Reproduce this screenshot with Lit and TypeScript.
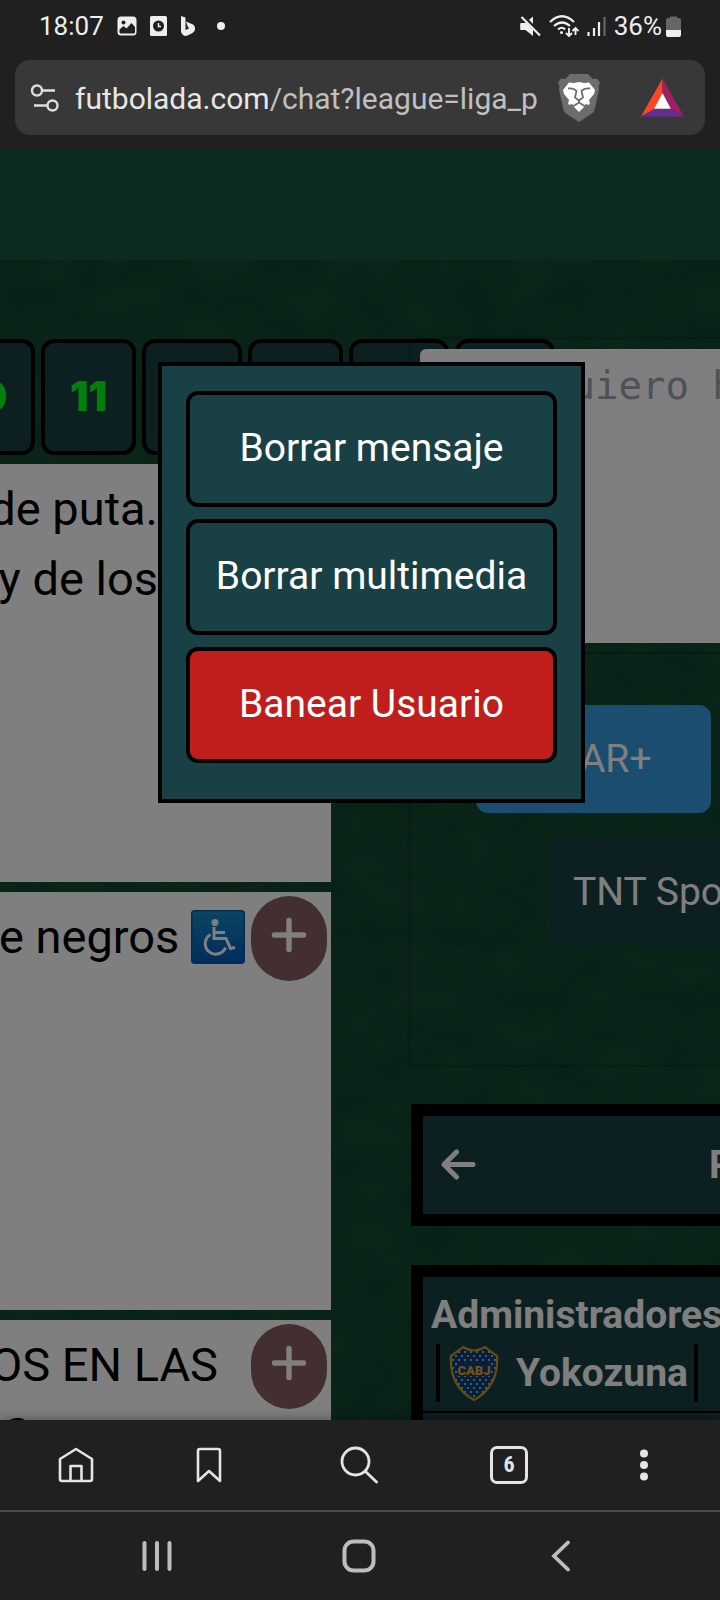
import { LitElement, html, css, svg } from "lit";
import { customElement } from "lit/decorators.js";

const plus = html`<svg width="36" height="36" viewBox="0 0 36 36" fill="none" stroke="currentColor" stroke-width="5.5" stroke-linecap="round"><path d="M18 3.500v29M3.500 18h29" /></svg>`;

@customElement("status-bar")
class StatusBar extends LitElement {
  static styles = css`
    :host {
      display: flex;
      align-items: center;
      height: 52px;
      padding: 0 39px;
      box-sizing: border-box;
      color: #eee;
      font-size: 26px;
      line-height: 30px;
    }
    .side { display: flex; align-items: center; gap: 13px; }
    .side.right { margin-left: auto; gap: 8px; }
    .dot { width: 8px; height: 8px; border-radius: 50%; background: #eee; margin-left: 8px; }
    .power { display: flex; align-items: center; gap: 4px; }
    svg { display: block; }
  `;
  render() {
    return html`
      <div class="side">
        <span>18:07</span>
        <svg width="20" height="20" viewBox="0 0 20 20">
          <rect x=".5" y=".5" width="19" height="19" rx="3.500" fill="#eee" />
          <circle cx="6.500" cy="6.500" r="2" fill="#202020" />
          <path d="M2.500 16v-2.500l4-3.500 3 2.500 5-5.500 3.500 4V16q0 1.500-1.500 1.500H4Q2.500 17.500 2.500 16z" fill="#202020" />
        </svg>
        <svg width="17" height="20" viewBox="0 0 17 20">
          <rect width="17" height="20" rx="1.500" fill="#eee" />
          <circle cx="8.500" cy="10" r="5.500" fill="#202020" />
          <path d="M8.500 7v3.500H11" fill="none" stroke="#eee" stroke-width="1.500" />
        </svg>
        <svg width="16" height="20" viewBox="0 0 16 20" fill="#eee">
          <path d="M1 0l4.500 1.500V14L9 12.500 7.500 10 6 5.500l7 3q2.500 1.500 2 5-.5 2-2.500 3.500l-5 2.500q-2.500 1-4.500-.5Q1 17.500 1 15z" />
        </svg>
        <span class="dot"></span>
      </div>
      <div class="side right">
        <svg width="21" height="21" viewBox="0 0 21 21">
          <path d="M1 7h4l8-6.500V20L5.500 14H1q-.8 0-.8-.8V8Q.2 7 1 7z" fill="#eee" />
          <path d="M3 .5L20 18" stroke="#202020" stroke-width="4" />
          <path d="M1.500 1L20 19.500" stroke="#eee" stroke-width="2.200" />
        </svg>
        <svg width="30" height="24" viewBox="0 0 30 24" fill="none" stroke="#eee" stroke-width="2.200">
          <path d="M1 8Q13-3.500 25 8M5 12q8-7 16 0M9 15.500q4-3.500 7 0" />
          <circle cx="12.500" cy="18.500" r="1.500" fill="#eee" stroke="none" />
          <path d="M20 14v8m-3-3l3 3 3-3M26.500 21v-7m-3 3l3-3 3 3" stroke-width="1.900" />
        </svg>
        <svg width="19" height="20" viewBox="0 0 19 20" stroke-width="2.200">
          <path d="M1.500 16v4M7 12v8M12 6v14" stroke="#eee" />
          <path d="M17.500 1v19" stroke="#666" />
        </svg>
        <span class="power">
          <span>36%</span>
          <svg width="15" height="21" viewBox="0 0 15 21">
            <path d="M4 2V.5h7V2h2q2 0 2 2v11H0V4q0-2 2-2z" fill="#666" />
            <path d="M0 14h15v5q0 2-2 2H2q-2 0-2-2z" fill="#eee" />
          </svg>
        </span>
      </div>
    `;
  }
}

@customElement("address-bar")
class AddressBar extends LitElement {
  static styles = css`
    :host { display: block; padding: 8px 15px 15px; }
    .bar {
      display: flex;
      align-items: center;
      height: 75px;
      padding: 0 21px 0 15px;
      border-radius: 15px;
      background: #383838;
    }
    button { border: 0; padding: 0; background: none; font: inherit; display: block; }
    svg { display: block; }
    .url {
      flex: 1;
      min-width: 0;
      margin-left: 15px;
      padding-top: 2px;
      overflow: hidden;
      white-space: nowrap;
      text-align: left;
      font-size: 30px;
      line-height: 40px;
      color: #c0c0c0;
    }
    .host { color: #e6e6e6; }
    .shield { margin-right: 41px; }
  `;
  render() {
    return html`
      <div class="bar">
        <button aria-label="Información del sitio">
          <svg width="30" height="28" viewBox="0 0 30 28" fill="none" stroke="#ddd" stroke-width="2.400">
            <circle cx="7" cy="6.500" r="5" /><path d="M12 6.500h13M4 21.500h13" />
            <circle cx="22.500" cy="21.500" r="5" />
          </svg>
        </button>
        <button class="url"><span class="host">futbolada.com</span>/chat?league=liga_p</button>
        <button class="shield" aria-label="Escudos">
          <svg width="42" height="48" viewBox="0 0 42 48">
            <path d="M12 0h18l5 5 4-.5 3 4-1.500 4L41 16l-4.500 20Q36 38 34 39.500L21 48 8 39.500Q6 38 5.500 36L1 16l.5-3.500L0 8.500l3-4L7 5z" fill="#6d6d6d" />
            <path d="M11 8.500l5 .5 5-1 5 1 5-.5 6 7.500-1 4-5 6 1 4-6 3-2.500 2.500L21 38l-2.500-2.500L16 33l-6-3 1-4-5-6-1-4z" fill="#fff" />
            <path d="M10 14.500q6-.5 8.500 2.500l-1.500 6.500 4 3 4-3-1.500-6.500q2.500-3 8.500-2.500" fill="none" stroke="#6d6d6d" stroke-width="1.800" />
            <path d="M21 26v3M12.500 30.500l3 1.500L21 28.500l5.500 3.500 3-1.500" fill="none" stroke="#6d6d6d" stroke-width="1.800" />
          </svg>
        </button>
        <button aria-label="Recompensas">
          <svg width="43" height="39" viewBox="0 0 44 39">
            <path d="M22 0v15l-8 16L0 39z" fill="#ff4724" />
            <path d="M22 0l22 39-14-8-8-16z" fill="#9e1f63" />
            <path d="M0 39l14-8h16l14 8z" fill="#662d91" />
            <path d="M22 15l8.500 16h-17z" fill="#fff" />
          </svg>
        </button>
      </div>
    `;
  }
}

@customElement("chat-message")
class ChatMessage extends LitElement {
  static styles = css`
    :host {
      display: flex;
      align-items: flex-start;
      justify-content: flex-end;
      gap: 6px;
      min-height: 418px;
      box-sizing: border-box;
      padding: 4px 4px 0 0;
      background: #fff;
      color: #000;
    }
    .text {
      padding-top: 6px;
      text-align: right;
      white-space: nowrap;
      font-size: 47px;
      line-height: 70px;
    }
    .more {
      flex: none;
      width: 76px;
      height: 85px;
      padding: 0 0 7px;
      border: 0;
      border-radius: 38px;
      background: #865e5e;
      color: #fff;
      display: grid;
      place-items: center;
    }
  `;
  render() {
    return html`
      <div class="text"><slot></slot></div>
      <button class="more" aria-label="Más opciones">${plus}</button>
    `;
  }
}

@customElement("chat-page")
class ChatPage extends LitElement {
  static styles = css`
    :host {
      display: block;
      position: relative;
      overflow: hidden;
      background: #0e442d;
    }
    .grass { position: absolute; inset: 0; width: 100%; height: 100%; }
    .banner { position: relative; height: 110px; background: #18543c; }
    .columns {
      position: relative;
      display: grid;
      grid-template-columns: 331px 620px;
      column-gap: 80px;
      padding-top: 79px;
    }
    .rounds { display: flex; gap: 6px; margin-left: -68px; width: max-content; }
    .rounds button {
      width: 95px;
      height: 116px;
      border: 4px solid #000;
      border-radius: 13px;
      background: #194145;
      color: #00ff18;
      font: 900 41px Inter, sans-serif;
      padding: 0 0 3px;
    }
    .rounds .wide { width: 100px; }
    .rounds .first { width: 103px; }
    .messages { display: flex; flex-direction: column; gap: 10px; margin-top: 9px; }
    .pad-long { padding-right: 87px; }
    .pad-short { padding-right: 27px; }
    .last { display: block; padding-right: 214px; }
    .emoji { display: inline-block; vertical-align: -11px; }
    .side { position: relative; min-width: 0; }
    .composer {
      padding: 10px 9px 0;
      height: 726px;
      box-sizing: border-box;
      box-shadow: 0 0 4px #0008;
      display: flex;
      flex-direction: column;
      align-items: flex-start;
    }
    textarea {
      display: block;
      box-sizing: border-box;
      width: 100%;
      height: 294px;
      padding: 13px 0 0 128px;
      border: 0;
      border-radius: 6px;
      resize: none;
      background: #fff;
      font: 39px/48px "DejaVu Sans Mono", monospace;
    }
    textarea::placeholder { color: #9ca3af; opacity: 1; }
    .links {
      width: 100%;
      box-sizing: border-box;
      margin-top: 9px;
      padding: 51px 56px 0;
      display: flex;
      flex-direction: column;
      align-items: flex-start;
      gap: 25px;
      border-top: 2px solid #0a3824;
    }
    .links a {
      box-sizing: border-box;
      height: 108px;
      border-radius: 12px;
      padding: 0 59px;
      color: #fff;
      text-decoration: none;
      font-size: 39px;
      line-height: 108px;
    }
    .links .star { background: #369adc; }
    .links .tnt { background: #194145; margin-left: 73px; padding: 0 24px; }
    .box {
      margin-top: 39px;
      border: 12px solid #000;
      background: #194145;
      color: #fff;
      font-size: 39px;
      font-weight: 700;
    }
    .heading { display: flex; align-items: center; height: 98px; padding-left: 18px; }
    .heading button { border: 0; padding: 0 0 1px; background: none; color: #fff; display: block; }
    .heading span { margin-left: 233px; }
    svg { display: block; }
    .title { margin: 0; padding: 13px 8px 0; font-size: 39px; line-height: 50px; }
    .admin {
      display: inline-flex;
      align-items: center;
      height: 58px;
      margin: 4px 0 9px 13px;
      padding: 0 6px 0 9px;
      border: solid #000;
      border-width: 0 4px;
      line-height: 58px;
      vertical-align: top;
    }
    .admin span { margin-left: 17px; }
    .next { height: 80px; border-top: 2px solid #000; }
    .shade { position: absolute; inset: 0; background: #00000080; }
    .dialog {
      position: absolute;
      left: 158px;
      top: 212px;
      box-sizing: border-box;
      width: 427px;
      padding: 25px 24px 36px;
      border: 4px solid #000;
      background: #194145;
      display: flex;
      flex-direction: column;
      gap: 12px;
    }
    .dialog button {
      height: 116px;
      padding: 0 0 2px;
      border: 4px solid #000;
      border-radius: 12px;
      background: #194145;
      color: #fff;
      font: 39px Roboto, sans-serif;
    }
    .dialog .danger { background: #c01e1c; }
  `;
  private dots() {
    const out = [];
    for (let r = 0; r < 13; r++)
      for (let c = 0; c < 8; c++)
        out.push(svg`<circle cx=${4 + c * 6 + (r % 2) * 3} cy=${7 + r * 4} r="0.9" fill="#ffe9a0" />`);
    return out;
  }
  render() {
    return html`
      <svg class="grass" aria-hidden="true">
        <filter id="n" x="0" y="0" width="100%" height="100%">
          <feTurbulence type="fractalNoise" baseFrequency="0.02 0.03" numOctaves="4" seed="4" />
          <feColorMatrix values="0 0 0 0 .16  0 0 0 0 .22  0 0 0 0 .12  .9 0 0 0 -.2" />
        </filter>
        <rect width="100%" height="100%" filter="url(#n)" opacity=".22" />
      </svg>
      <div class="banner"></div>
      <div class="columns">
        <div>
          <nav class="rounds" aria-label="Fechas">
            <button class="first">10</button><button>11</button>
            <button class="wide"></button><button></button>
            <button class="wide"></button><button class="wide"></button>
          </nav>
          <div class="messages">
            <chat-message><div class="pad-long">de puta.<br />y de los</div></chat-message>
            <chat-message>e negros <svg class="emoji" role="img" aria-label="♿" width="54" height="54" viewBox="0 0 54 54">
              <defs><linearGradient id="g" x2="0" y2="1"><stop stop-color="#168cc4" /><stop offset="1" stop-color="#0359b8" /></linearGradient></defs>
              <rect x=".75" y=".75" width="52.500" height="52.500" rx="3" fill="url(#g)" stroke="#0a55a8" stroke-width="1.500" />
              <circle cx="24" cy="12.500" r="3.500" fill="#fff" />
              <path d="M23 17v11.500h12l4.500 10 4.500-1M23 22.500h11M19.500 24.500a10.500 10.500 0 1 0 15 13" fill="none" stroke="#fff" stroke-width="3" />
            </svg></chat-message>
            <chat-message><div class="pad-short">OS EN LAS</div><span class="last">S</span></chat-message>
          </div>
        </div>
        <div class="side">
          <div class="composer">
            <textarea aria-label="Mensaje" placeholder="Quiero hablar de"></textarea>
            <div class="links">
              <a class="star" href="#star">STAR+</a>
              <a class="tnt" href="#tnt">TNT Sports</a>
            </div>
          </div>
          <div class="box heading">
            <button aria-label="Anterior">
              <svg width="35" height="31" viewBox="0 0 35 31" fill="none" stroke="currentColor" stroke-width="5" stroke-linecap="round" stroke-linejoin="round"><path d="M15.500 3L3 15.500 15.500 28M3.500 15.500h28.500" /></svg>
            </button>
            <span>Posiciones</span>
          </div>
          <div class="box">
            <h2 class="title">Administradores</h2>
            <div class="admin">
              <svg width="50" height="57" viewBox="0 0 50 57">
                <defs><clipPath id="c"><path d="M14 2q11 7 22 0l12 9q2 30-23 44Q0 41 2 11z" /></clipPath></defs>
                <g clip-path="url(#c)">
                  <rect width="50" height="57" fill="#0a407c" />
                  ${this.dots()}
                  <rect x="8" y="18" width="34" height="13" fill="#0a407c" />
                </g>
                <path d="M14 2q11 7 22 0l12 9q2 30-23 44Q0 41 2 11z" fill="none" stroke="#c8961e" stroke-width="2.200" />
                <text x="25" y="30" text-anchor="middle" font-family="Roboto" font-weight="900" font-size="13" fill="#e0a81e">CABJ</text>
              </svg>
              <span>Yokozuna</span>
            </div>
            <div class="next"></div>
          </div>
        </div>
      </div>
      <div class="shade"></div>
      <div class="dialog" role="dialog" aria-label="Moderación">
        <button>Borrar mensaje</button>
        <button>Borrar multimedia</button>
        <button class="danger">Banear Usuario</button>
      </div>
    `;
  }
}

@customElement("app-root")
class AppRoot extends LitElement {
  static styles = css`
    :host {
      display: flex;
      flex-direction: column;
      height: 100vh;
      overflow: hidden;
      background: #202020;
      font-family: Roboto, sans-serif;
    }
    chat-page { flex: 1; min-height: 0; }
    .tools {
      position: relative;
      display: grid;
      grid-template-columns: 151fr 116fr 184fr 116fr 153fr;
      height: 90px;
      background: #202020;
      box-shadow: 0 0 12px #0006;
    }
    .system {
      position: relative;
      display: grid;
      grid-template-columns: repeat(3, 1fr);
      height: 88px;
      padding: 0 58px 0 56px;
      background: #202020;
      border-top: 2px solid #4a4a4a;
    }
    button {
      display: grid;
      place-items: center;
      border: 0;
      padding: 0;
      background: none;
      color: #e4e4e4;
    }
    .system button { color: #bdbdbd; }
    .count {
      box-sizing: border-box;
      width: 38px;
      height: 38px;
      border: 3px solid;
      border-radius: 7px;
      font: 700 22px/32px "Roboto Condensed", Roboto, sans-serif;
    }
    svg { display: block; }
  `;
  render() {
    return html`
      <status-bar></status-bar>
      <address-bar></address-bar>
      <chat-page></chat-page>
      <div class="tools">
        <button aria-label="Inicio">
          <svg width="36" height="36" viewBox="0 0 36 36" fill="none" stroke="currentColor" stroke-width="2.600" stroke-linejoin="round"><path d="M2 12L18 2l16 10v20q0 2-2 2H4q-2 0-2-2zM12.500 34V19h11v15" /></svg>
        </button>
        <button aria-label="Marcadores">
          <svg width="26" height="36" viewBox="0 0 26 36" fill="none" stroke="currentColor" stroke-width="2.600" stroke-linejoin="round"><path d="M2 4q0-2 2-2h18q2 0 2 2v30L13 24 2 34z" /></svg>
        </button>
        <button aria-label="Buscar">
          <svg width="38" height="38" viewBox="0 0 38 38" fill="none" stroke="currentColor" stroke-width="2.800" stroke-linecap="round"><circle cx="15.500" cy="15.500" r="13.500" /><path d="M25.500 25.500L36.500 36" /></svg>
        </button>
        <button aria-label="Pestañas"><span class="count">6</span></button>
        <button aria-label="Menú">
          <svg width="8" height="32" viewBox="0 0 8 32" fill="currentColor"><circle cx="4" cy="4.500" r="4" /><circle cx="4" cy="16" r="4" /><circle cx="4" cy="27.500" r="4" /></svg>
        </button>
      </div>
      <div class="system">
        <button aria-label="Recientes">
          <svg width="30" height="32" viewBox="0 0 30 32" stroke="currentColor" stroke-width="4" stroke-linecap="round"><path d="M2.500 3v26M15 3v26M27.500 3v26" /></svg>
        </button>
        <button aria-label="Pantalla principal">
          <svg width="34" height="34" viewBox="0 0 34 34" fill="none" stroke="currentColor" stroke-width="4"><rect x="2.500" y="2.500" width="29" height="29" rx="9" /></svg>
        </button>
        <button aria-label="Atrás">
          <svg width="20" height="32" viewBox="0 0 20 32" fill="none" stroke="currentColor" stroke-width="3.800" stroke-linecap="round"><path d="M17 2.500L3 16l14 13.500" /></svg>
        </button>
      </div>
    `;
  }
}
